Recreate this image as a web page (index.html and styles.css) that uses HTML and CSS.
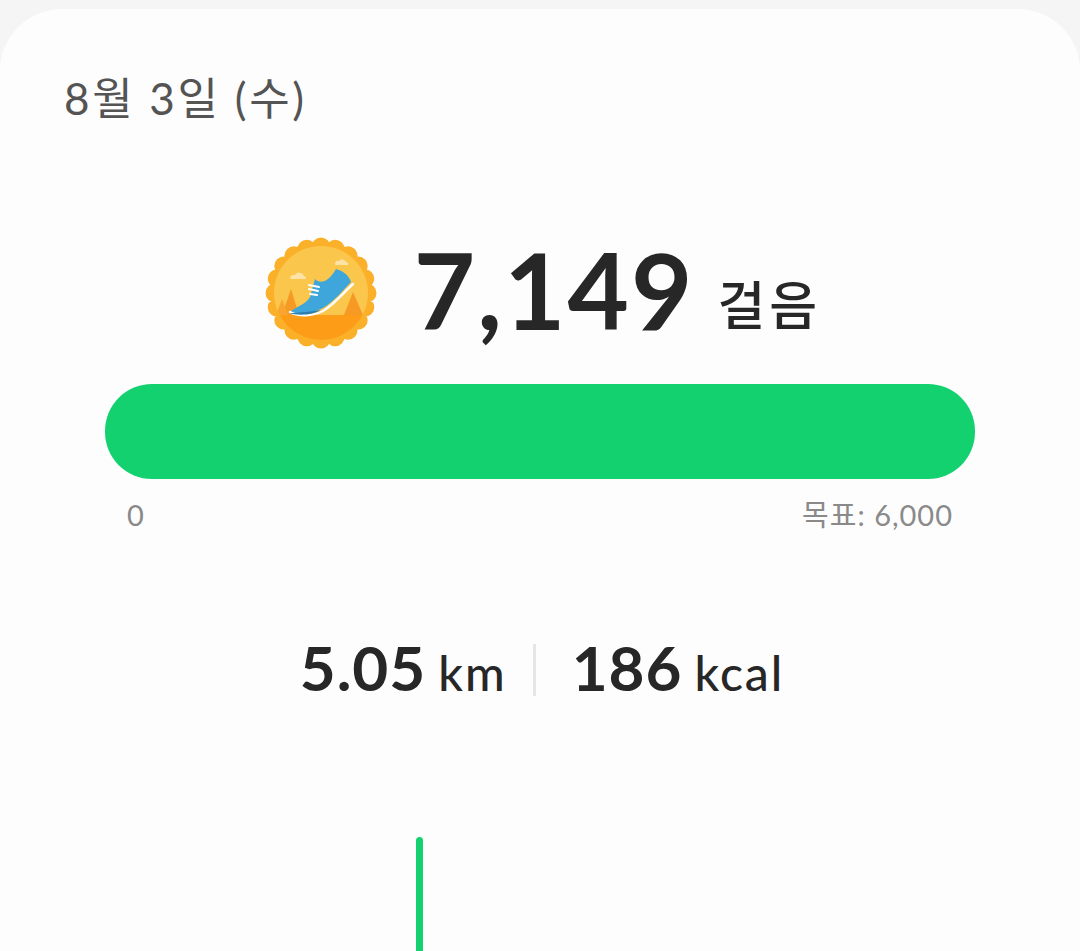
FILE: index.html
```html
<!DOCTYPE html>
<html lang="ko">
<head>
    <meta charset="UTF-8">
    <meta name="viewport" content="width=device-width, initial-scale=1.0">
    <title>걸음</title>
    <link rel="stylesheet" href="styles.css">
</head>
<body>

    <div class="card">
        <!-- Date -->
        <div class="date">8월 3일 (수)</div>

        <!-- Steps -->
        <div class="steps">
            <svg class="badge" viewBox="0 0 116 116" width="116" height="116">
                <defs>
                    <clipPath id="inner"><circle cx="58" cy="58" r="47"/></clipPath>
                </defs>
                <circle cx="58" cy="58" r="48" fill="#fbb02a"/>
                <circle cx="58" cy="58" r="46" fill="none" stroke="#fbb02a" stroke-width="19" stroke-linecap="round" pathLength="20" stroke-dasharray="0 1"/>
                <circle cx="58" cy="58" r="47" fill="#fbc64c"/>
                <g clip-path="url(#inner)">
                    <rect x="0" y="80" width="116" height="40" fill="#fd9c17"/>
                    <path d="M28 54 L36 80 L19 80 Z" fill="#f79a25"/>
                    <path d="M19 64 L25 80 L13 80 Z" fill="#f9a631"/>
                    <path d="M90 57 L100 80 L81 80 Z" fill="#f79a25"/>
                </g>
                <path d="M27 43 a4 4 0 0 1 5 -3 a5 5 0 0 1 9 1 a3 3 0 0 1 2 3 H28 a2 2 0 0 1 -1 -1 Z" fill="#fde3a6"/>
                <path d="M72 28 a3 3 0 0 1 4 -2 a4 4 0 0 1 7 1 a2 2 0 0 1 2 3 H73 a1.500 1.500 0 0 1 -1 -2 Z" fill="#fde3a6"/>
                <path d="M27 77 C34 71 42 70 47 62 L52 44 C58 50 66 46 73 34 C81 36 86 41 88 47 C80 55 72 66 60 73 C50 78 37 80 27 77 Z" fill="#3ea6da"/>
                <path d="M27 77 C35 82 50 81 60 76 C72 69 80 58 90 49" fill="none" stroke="#fdfdfd" stroke-width="2.500" stroke-linecap="round"/>
                <path d="M26 78 C36 81 50 80 58 75 C50 76 36 78 26 78 Z" fill="#2b7fb0"/>
                <g stroke="#fdfdfd" stroke-width="2" stroke-linecap="round">
                    <path d="M46 54 L55 56"/>
                    <path d="M46 50 L56 52"/>
                    <path d="M47 59 L54 60"/>
                </g>
            </svg>
            <span class="steps-count">7,149</span>
            <span class="steps-unit">걸음</span>
        </div>

        <!-- Progress -->
        <div class="progress">
            <div class="progress-fill"></div>
        </div>
        <div class="progress-labels">
            <span>0</span>
            <span class="progress-goal">목표: 6,000</span>
        </div>

        <!-- Distance and calories -->
        <div class="stats">
            <div class="stat"><span class="stat-value">5.05</span><span class="stat-unit">km</span></div>
            <div class="stat-divider"></div>
            <div class="stat"><span class="stat-value">186</span><span class="stat-unit">kcal</span></div>
        </div>

        <!-- Chart -->
        <div class="chart">
            <div class="chart-bar"></div>
        </div>
    </div>

</body>
</html>
```

FILE: styles.css
```css
/* General Styles */
* {
    margin: 0;
    padding: 0;
    box-sizing: border-box;
    font-family: "Lato", "Noto Sans CJK KR", sans-serif;
}
html, body {
    height: 100%;
    overflow: hidden;
}
body {
    background: #f5f5f5;
    padding-top: 9px;
}

/* Card */
.card {
    height: 942px;
    background: #fdfdfd;
    border-radius: 62px 62px 0 0;
    overflow: hidden;
}

/* Date */
.date {
    padding: 56px 0 0 64px;
    font-size: 44px;
    line-height: 66px;
    color: #545454;
    letter-spacing: 2.7px;
}

/* Steps */
.steps {
    display: flex;
    align-items: center;
    justify-content: center;
    margin-top: 104px;
    height: 116px;
    color: #272727;
    padding-left: 4px;
}
.badge {
    flex: none;
}
.steps-count {
    margin: 0 0 9px 35px;
    font-size: 106px;
    font-weight: 700;
    line-height: 116px;
    letter-spacing: 2px;
}
.steps-unit {
    margin: 24px 0 0 23px;
    font-size: 52px;
    font-weight: 500;
    line-height: 60px;
    letter-spacing: 4px;
}

/* Progress */
.progress {
    margin: 33px 105px 0;
    height: 95px;
    border-radius: 47px;
    background: #e9e9e9;
    overflow: hidden;
}
.progress-fill {
    height: 100%;
    background: #13d16f;
}
.progress-labels {
    display: flex;
    justify-content: space-between;
    padding: 16px 127px 0;
    font-size: 29px;
    line-height: 40px;
    color: #8a8a8a;
}
.progress-goal {
    letter-spacing: 1px;
}

/* Stats */
.stats {
    display: flex;
    align-items: center;
    justify-content: center;
    margin-top: 108px;
    height: 54px;
    padding-left: 4px;
    color: #272727;
}
.stat {
    display: flex;
    align-items: baseline;
    gap: 12px;
    white-space: nowrap;
}
.stat-value {
    font-size: 62px;
    font-weight: 700;
    line-height: 54px;
    letter-spacing: 1px;
}
.stat-unit {
    font-size: 48px;
    font-weight: 500;
    line-height: 54px;
    letter-spacing: 2px;
}
.stat-divider {
    width: 3px;
    height: 52px;
    margin: 0 36px 0 26px;
    background: #e6e6e6;
}

/* Chart */
.chart {
    padding: 140px 0 0 416px;
}
.chart-bar {
    width: 7px;
    height: 130px;
    border-radius: 4px;
    background: #13d16f;
}
```
